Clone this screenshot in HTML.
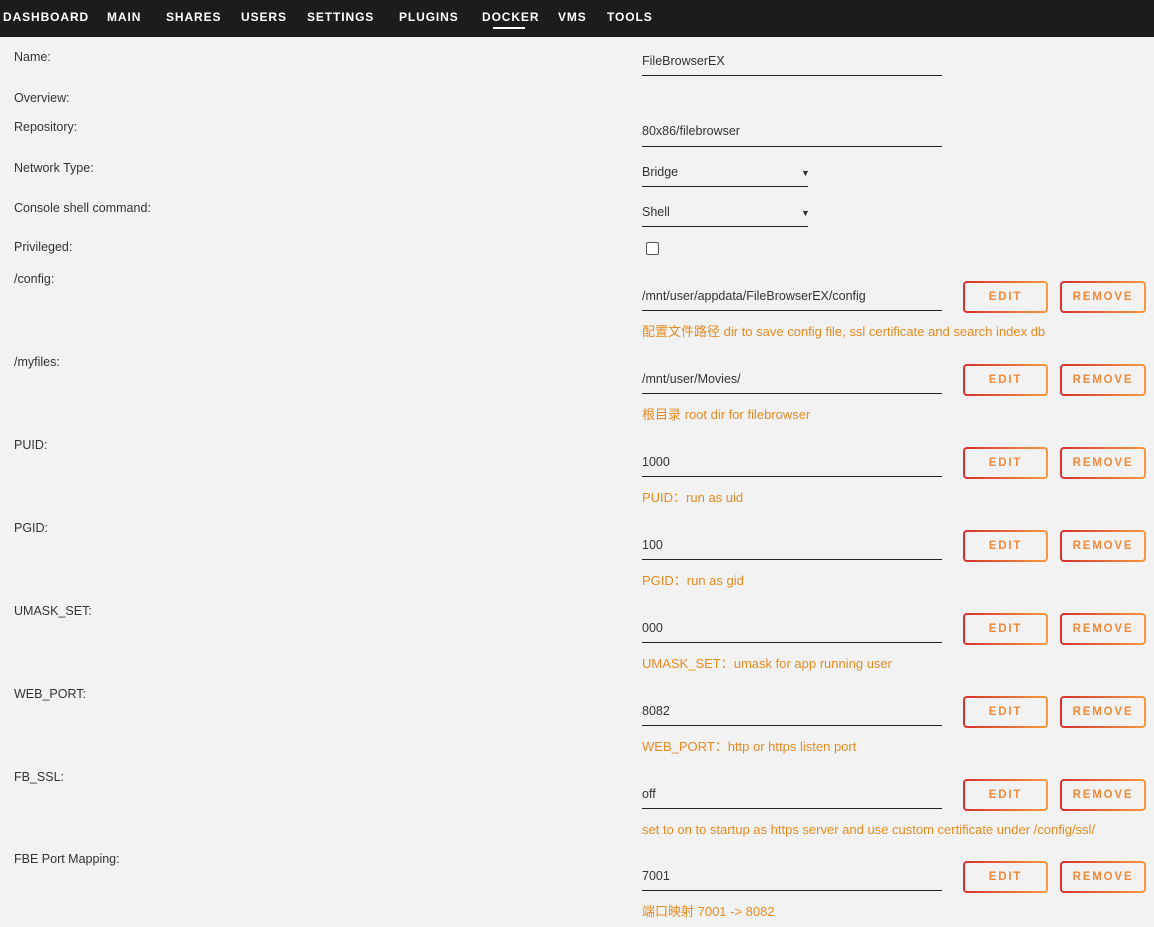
<!DOCTYPE html>
<html><head><meta charset="utf-8"><style>
*{margin:0;padding:0;box-sizing:border-box}
body{width:1154px;height:927px;background:#f2f2f2;font-family:"Liberation Sans","Noto Sans CJK SC",sans-serif;font-size:12.5px;color:#333;position:relative;overflow:hidden}
.nav{position:absolute;left:0;top:0;width:1154px;height:37px;background:#1c1c1c}
.nav span{position:absolute;top:10px;color:#fff;font-weight:bold;font-size:12px;letter-spacing:0.9px;line-height:14px}
.ul{position:absolute;left:493px;top:27px;width:32px;height:2px;background:#fff}
.t{position:absolute;line-height:16px;white-space:nowrap}
.l{left:14px}
.v{left:642px}
.line{position:absolute;left:642px;width:300px;height:1px;background:#222}
.sel{width:166px}
.d{left:642px;color:#e68a1e;font-size:13px}
.btn{position:absolute;height:32px;border-radius:4px;padding:2px;background:linear-gradient(90deg,#d83030,#f59a3e)}
.btn div{width:100%;height:100%;background:#f2f2f2;border-radius:2px;color:#f08a3a;font-weight:bold;font-size:11.5px;letter-spacing:1.8px;text-align:center;line-height:28px}
.arr{position:absolute;left:801px;font-size:9px}
.cb{position:absolute;left:646px;top:242px;width:13px;height:13px;border:1px solid #555;border-radius:2px;background:#fff}
</style></head><body>
<div class="nav">
<span style="left:3px">DASHBOARD</span><span style="left:107px">MAIN</span><span style="left:166px">SHARES</span><span style="left:241px">USERS</span><span style="left:307px">SETTINGS</span><span style="left:399px">PLUGINS</span><span style="left:482px">DOCKER</span><span style="left:558px">VMS</span><span style="left:607px">TOOLS</span>
<div class="ul"></div></div>

<div class="t l" style="top:49px">Name:</div>
<div class="t v" style="top:53px">FileBrowserEX</div><div class="line" style="top:75px"></div>
<div class="t l" style="top:90px">Overview:</div>
<div class="t l" style="top:119px">Repository:</div>
<div class="t v" style="top:123px">80x86/filebrowser</div><div class="line" style="top:146px"></div>
<div class="t l" style="top:160px">Network Type:</div>
<div class="t v" style="top:164px">Bridge</div><div class="t arr" style="top:165px">▼</div><div class="line sel" style="top:186px"></div>
<div class="t l" style="top:200px">Console shell command:</div>
<div class="t v" style="top:204px">Shell</div><div class="t arr" style="top:205px">▼</div><div class="line sel" style="top:226px"></div>
<div class="t l" style="top:239px">Privileged:</div>
<div class="cb"></div>

<div class="t l" style="top:271px">/config:</div>
<div class="t v" style="top:288px">/mnt/user/appdata/FileBrowserEX/config</div><div class="line" style="top:310px"></div>
<div class="btn" style="left:963px;top:281px;width:85px"><div>EDIT</div></div><div class="btn" style="left:1060px;top:281px;width:86px"><div>REMOVE</div></div>
<div class="t d" style="top:324px">配置文件路径 dir to save config file, ssl certificate and search index db</div>

<div class="t l" style="top:354px">/myfiles:</div>
<div class="t v" style="top:371px">/mnt/user/Movies/</div><div class="line" style="top:393px"></div>
<div class="btn" style="left:963px;top:364px;width:85px"><div>EDIT</div></div><div class="btn" style="left:1060px;top:364px;width:86px"><div>REMOVE</div></div>
<div class="t d" style="top:407px">根目录 root dir for filebrowser</div>

<div class="t l" style="top:437px">PUID:</div>
<div class="t v" style="top:454px">1000</div><div class="line" style="top:476px"></div>
<div class="btn" style="left:963px;top:447px;width:85px"><div>EDIT</div></div><div class="btn" style="left:1060px;top:447px;width:86px"><div>REMOVE</div></div>
<div class="t d" style="top:490px">PUID：run as uid</div>

<div class="t l" style="top:520px">PGID:</div>
<div class="t v" style="top:537px">100</div><div class="line" style="top:559px"></div>
<div class="btn" style="left:963px;top:530px;width:85px"><div>EDIT</div></div><div class="btn" style="left:1060px;top:530px;width:86px"><div>REMOVE</div></div>
<div class="t d" style="top:573px">PGID：run as gid</div>

<div class="t l" style="top:603px">UMASK_SET:</div>
<div class="t v" style="top:620px">000</div><div class="line" style="top:642px"></div>
<div class="btn" style="left:963px;top:613px;width:85px"><div>EDIT</div></div><div class="btn" style="left:1060px;top:613px;width:86px"><div>REMOVE</div></div>
<div class="t d" style="top:656px">UMASK_SET：umask for app running user</div>

<div class="t l" style="top:686px">WEB_PORT:</div>
<div class="t v" style="top:703px">8082</div><div class="line" style="top:725px"></div>
<div class="btn" style="left:963px;top:696px;width:85px"><div>EDIT</div></div><div class="btn" style="left:1060px;top:696px;width:86px"><div>REMOVE</div></div>
<div class="t d" style="top:739px">WEB_PORT：http or https listen port</div>

<div class="t l" style="top:769px">FB_SSL:</div>
<div class="t v" style="top:786px">off</div><div class="line" style="top:808px"></div>
<div class="btn" style="left:963px;top:779px;width:85px"><div>EDIT</div></div><div class="btn" style="left:1060px;top:779px;width:86px"><div>REMOVE</div></div>
<div class="t d" style="top:822px">set to on to startup as https server and use custom certificate under /config/ssl/</div>

<div class="t l" style="top:851px">FBE Port Mapping:</div>
<div class="t v" style="top:868px">7001</div><div class="line" style="top:890px"></div>
<div class="btn" style="left:963px;top:861px;width:85px"><div>EDIT</div></div><div class="btn" style="left:1060px;top:861px;width:86px"><div>REMOVE</div></div>
<div class="t d" style="top:904px">端口映射 7001 -&gt; 8082</div>
</body></html>
